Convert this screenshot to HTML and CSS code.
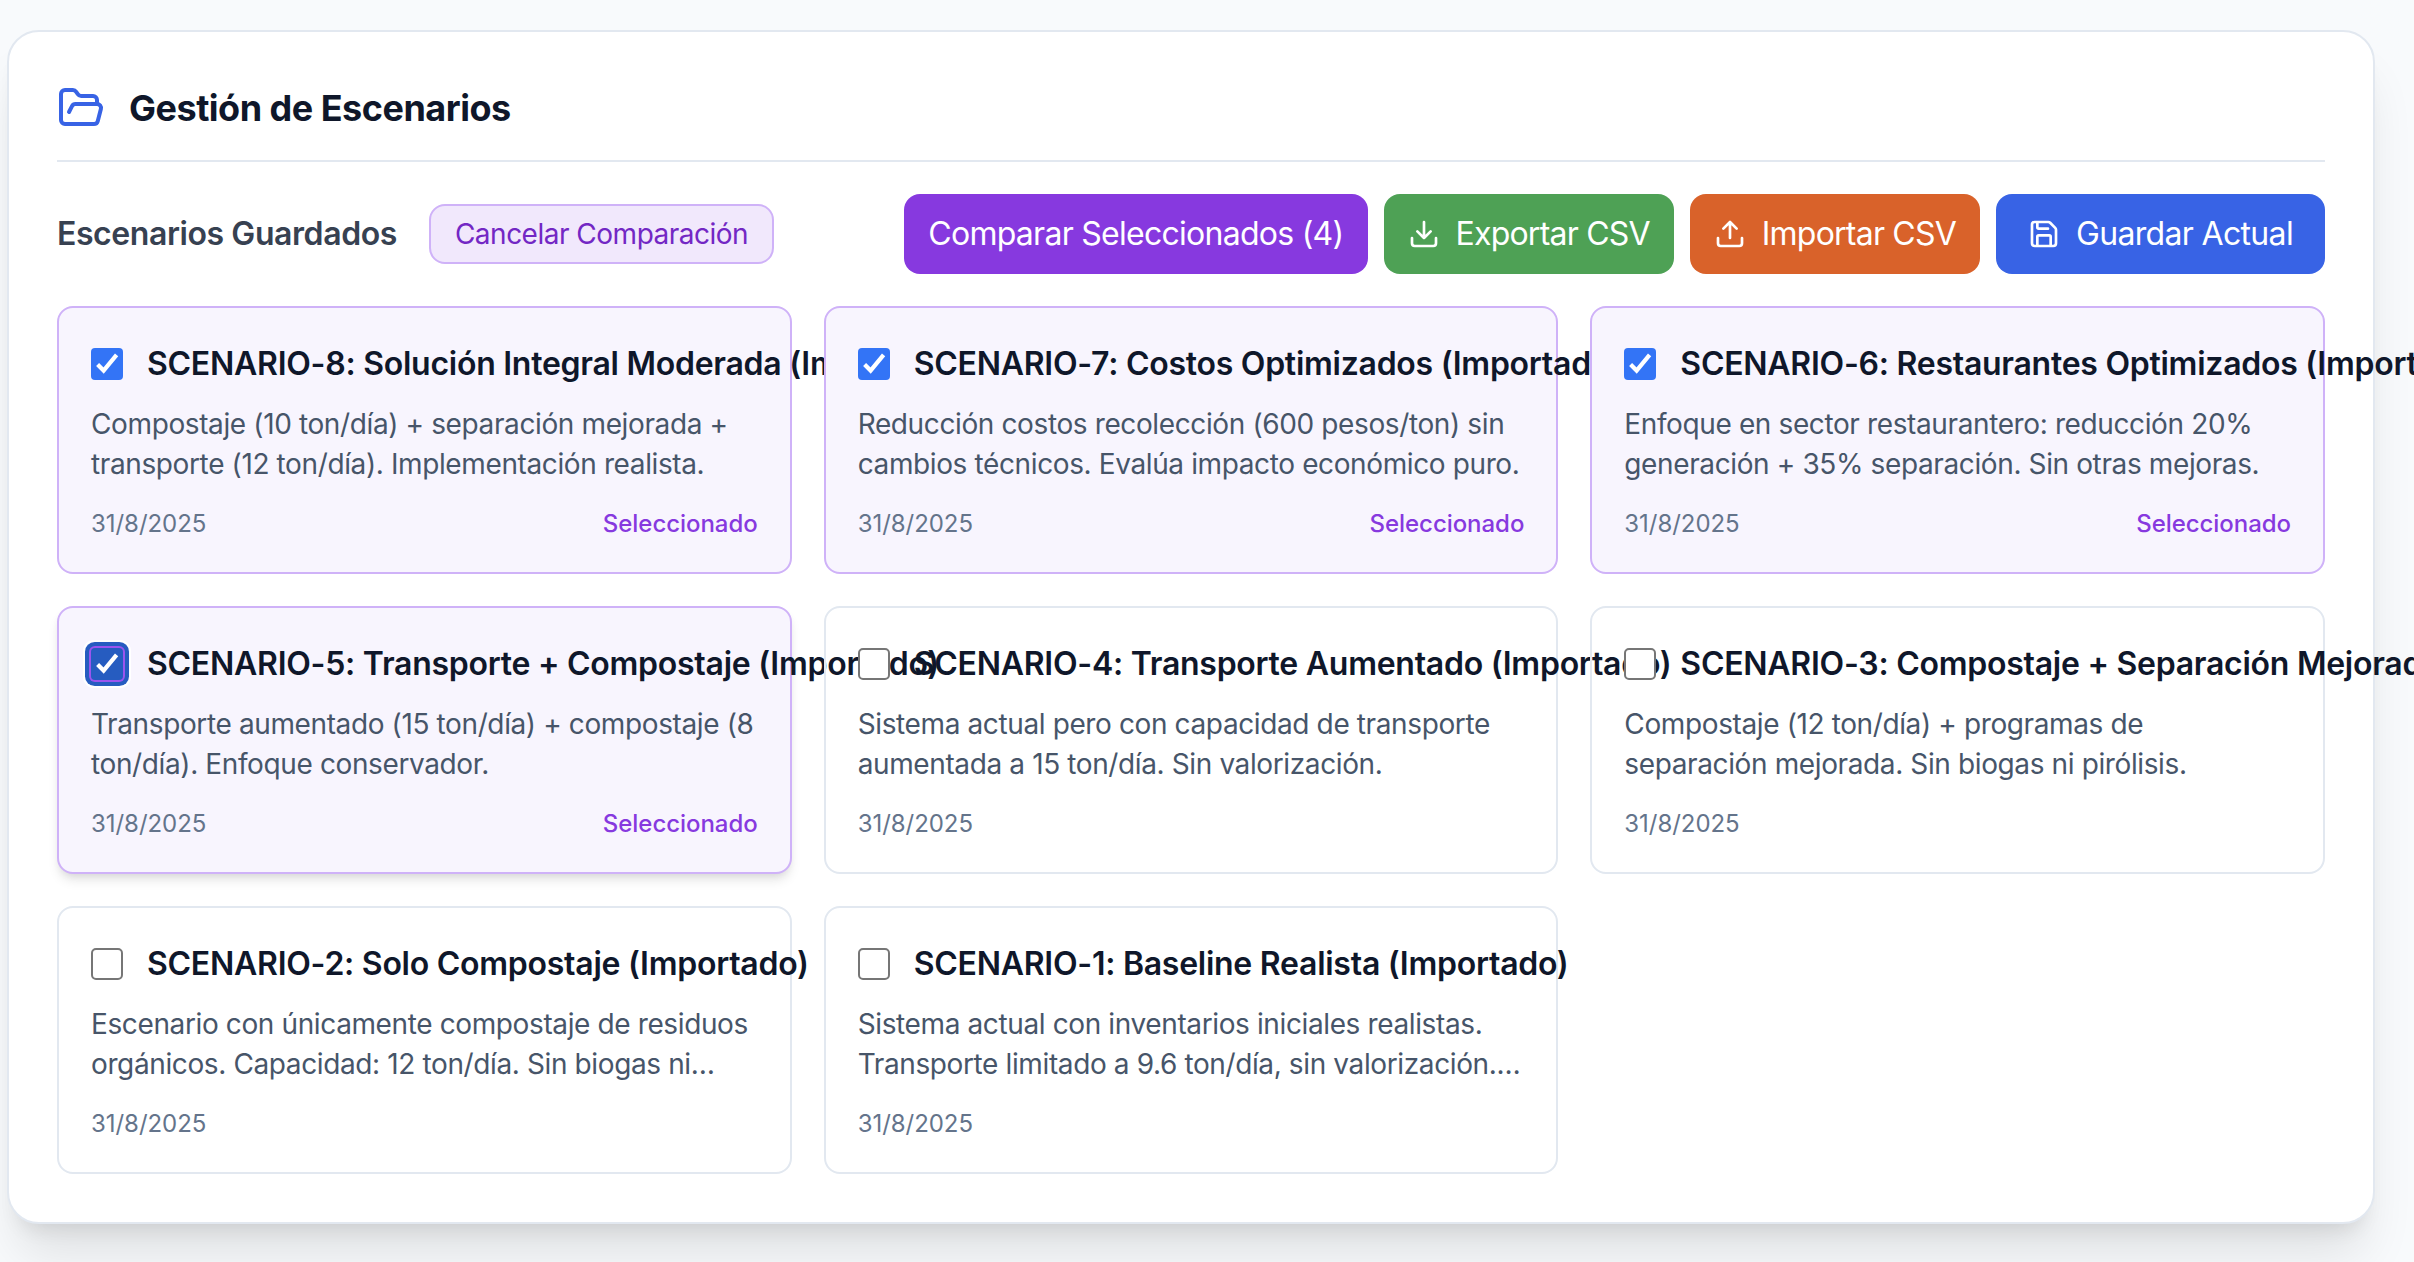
FILE: index.html
```html
<!DOCTYPE html>
<html lang="es">
<head>
<meta charset="utf-8">
<title>Gestión de Escenarios</title>
<link rel="stylesheet" href="styles.css">
</head>
<body>
<svg class="sprite" aria-hidden="true">
  <symbol id="check" viewBox="0 0 32 32"><path d="M6.6 16.6l6 6L25.6 6.8" fill="none" stroke="#fff" stroke-width="4.2"/></symbol>
</svg>
<main class="panel">
  <header class="panel-header">
    <svg class="icon panel-icon" viewBox="0 0 24 24"><path d="m6 14 1.5-2.9A2 2 0 0 1 9.24 10H20a2 2 0 0 1 1.94 2.5l-1.54 6a2 2 0 0 1-1.95 1.5H4a2 2 0 0 1-2-2V5a2 2 0 0 1 2-2h3.9a2 2 0 0 1 1.69.9l.81 1.2a2 2 0 0 0 1.67.9H18a2 2 0 0 1 2 2v2"/></svg>
    <h1 class="panel-title">Gestión de Escenarios</h1>
  </header>
  <div class="toolbar">
    <div class="toolbar-left">
      <h2 class="subtitle">Escenarios Guardados</h2>
      <button class="cancel">Cancelar Comparación</button>
    </div>
    <div class="toolbar-right">
      <button class="btn btn-purple">Comparar Seleccionados (4)</button>
      <button class="btn btn-green">
        <svg class="icon" viewBox="0 0 24 24"><path d="M21 15v4a2 2 0 0 1-2 2H5a2 2 0 0 1-2-2v-4M7 10l5 5 5-5M12 15V3"/></svg>Exportar CSV</button>
      <button class="btn btn-orange">
        <svg class="icon" viewBox="0 0 24 24"><path d="M21 15v4a2 2 0 0 1-2 2H5a2 2 0 0 1-2-2v-4M17 8l-5-5-5 5M12 3v12"/></svg>Importar CSV</button>
      <button class="btn btn-blue">
        <svg class="icon" viewBox="0 0 24 24"><path d="M15.2 3a2 2 0 0 1 1.4.6l3.8 3.8a2 2 0 0 1 .6 1.4V19a2 2 0 0 1-2 2H5a2 2 0 0 1-2-2V5a2 2 0 0 1 2-2zM17 21v-7a1 1 0 0 0-1-1H8a1 1 0 0 0-1 1v7M7 3v4a1 1 0 0 0 1 1h7"/></svg>Guardar Actual</button>
    </div>
  </div>
  <section class="grid">
    <article class="card selected">
      <div class="card-head"><span class="box checked"><svg><use href="#check"/></svg></span><h3 class="card-title">SCENARIO-8: Solución Integral Moderada (Importado)</h3></div>
      <p class="desc">Compostaje (10 ton/día) + separación mejorada +<br>transporte (12 ton/día). Implementación realista.</p>
      <div class="card-foot"><span>31/8/2025</span><span class="tag">Seleccionado</span></div>
    </article>
    <article class="card selected">
      <div class="card-head"><span class="box checked"><svg><use href="#check"/></svg></span><h3 class="card-title">SCENARIO-7: Costos Optimizados (Importado)</h3></div>
      <p class="desc">Reducción costos recolección (600 pesos/ton) sin<br>cambios técnicos. Evalúa impacto económico puro.</p>
      <div class="card-foot"><span>31/8/2025</span><span class="tag">Seleccionado</span></div>
    </article>
    <article class="card selected">
      <div class="card-head"><span class="box checked"><svg><use href="#check"/></svg></span><h3 class="card-title">SCENARIO-6: Restaurantes Optimizados (Importado)</h3></div>
      <p class="desc">Enfoque en sector restaurantero: reducción 20%<br>generación + 35% separación. Sin otras mejoras.</p>
      <div class="card-foot"><span>31/8/2025</span><span class="tag">Seleccionado</span></div>
    </article>
    <article class="card selected hovered">
      <div class="card-head"><span class="box checked focused"><svg><use href="#check"/></svg></span><h3 class="card-title">SCENARIO-5: Transporte + Compostaje (Importado)</h3></div>
      <p class="desc">Transporte aumentado (15 ton/día) + compostaje (8<br>ton/día). Enfoque conservador.</p>
      <div class="card-foot"><span>31/8/2025</span><span class="tag">Seleccionado</span></div>
    </article>
    <article class="card">
      <div class="card-head"><span class="box"></span><h3 class="card-title">SCENARIO-4: Transporte Aumentado (Importado)</h3></div>
      <p class="desc">Sistema actual pero con capacidad de transporte<br>aumentada a 15 ton/día. Sin valorización.</p>
      <div class="card-foot"><span>31/8/2025</span></div>
    </article>
    <article class="card">
      <div class="card-head"><span class="box"></span><h3 class="card-title">SCENARIO-3: Compostaje + Separación Mejorada (Importado)</h3></div>
      <p class="desc">Compostaje (12 ton/día) + programas de<br>separación mejorada. Sin biogas ni pirólisis.</p>
      <div class="card-foot"><span>31/8/2025</span></div>
    </article>
    <article class="card">
      <div class="card-head"><span class="box"></span><h3 class="card-title">SCENARIO-2: Solo Compostaje (Importado)</h3></div>
      <p class="desc">Escenario con únicamente compostaje de residuos<br>orgánicos. Capacidad: 12 ton/día. Sin biogas ni…</p>
      <div class="card-foot"><span>31/8/2025</span></div>
    </article>
    <article class="card">
      <div class="card-head"><span class="box"></span><h3 class="card-title">SCENARIO-1: Baseline Realista (Importado)</h3></div>
      <p class="desc">Sistema actual con inventarios iniciales realistas.<br>Transporte limitado a 9.6 ton/día, sin valorización.…</p>
      <div class="card-foot"><span>31/8/2025</span></div>
    </article>
  </section>
</main>
</body>
</html>
```
FILE: styles.css
```css
*{box-sizing:border-box}
html,body{height:100%}
body{margin:0;padding:30px 39px 0 7px;background:#f8fafc;font-family:Inter,"Liberation Sans",sans-serif;color:#0f172a;overflow:hidden}
h1,h2,h3,p{margin:0}
.sprite{display:none}
.icon{width:32px;height:32px;flex:none;fill:none;stroke:currentColor;stroke-width:2;stroke-linecap:round;stroke-linejoin:round}

.panel{padding:48px;background:#fff;border:2px solid #e2e8f0;border-radius:32px;box-shadow:0 40px 50px -10px rgba(0,0,0,.1),0 16px 20px -12px rgba(0,0,0,.1)}
.panel-header{display:flex;align-items:center;gap:24px;padding-bottom:24px;border-bottom:2px solid #e2e8f0}
.panel-icon{width:48px;height:48px;color:#3863e5}
.panel-title{font-size:36px;line-height:56px;font-weight:650;letter-spacing:-.5px}

.toolbar{display:flex;justify-content:space-between;align-items:center;margin:32px 0}
.toolbar-left{display:flex;align-items:center;gap:32px}
.toolbar-right{display:flex;gap:16px}
.subtitle{font-size:32px;line-height:48px;font-weight:600;color:#374151;letter-spacing:-.42px}
button{font-family:inherit;white-space:nowrap;border:0}
.cancel{height:60px;padding:0 24px;font-size:28px;line-height:40px;letter-spacing:-.5px;color:#7327c4;background:#f1e8fc;border:2px solid #cfb2f8;border-radius:16px}
.btn{display:flex;align-items:center;gap:16px;height:80px;padding:0 24px;border-radius:16px;font-size:32px;line-height:48px;letter-spacing:-.78px;color:#fff}
.btn-purple{background:#8739df;letter-spacing:-.73px}
.btn-green{background:#4ea155}
.btn-orange{background:#d9622a}
.btn-blue{background:#3863e5;padding:0 32px;letter-spacing:-.67px}

.grid{display:grid;grid-template-columns:repeat(3,minmax(0,1fr));gap:32px}
.card{position:relative;z-index:0;padding:32px;border:2px solid #e2e8f0;border-radius:16px;white-space:nowrap}
.selected{background:#f8f5fe;border-color:#cfb2f8}
.hovered{box-shadow:0 8px 12px -2px rgba(0,0,0,.1),0 4px 8px -4px rgba(0,0,0,.1)}
.card-head{display:flex;align-items:center;gap:24px;margin-bottom:16px}
.card-title{font-size:32px;line-height:48px;font-weight:600;letter-spacing:-.26px}
.box{flex:none;width:32px;height:32px;border:2px solid #767676;border-radius:5px;background:#fff}
.box svg{display:block;width:32px;height:32px}
.checked{border:0;background:#3374f6;border-radius:4px}
.focused{background:#265cc0;box-shadow:0 0 0 2px #9a55ee,0 0 0 6px #265cc0,0 0 0 8px #fff}
.desc{font-size:28px;line-height:40px;letter-spacing:-.38px;color:#475569}
.card-foot{display:flex;justify-content:space-between;margin-top:24px;font-size:24px;line-height:32px;letter-spacing:-.05px;color:#64748b}
.tag{font-weight:500;color:#8739df}
```
